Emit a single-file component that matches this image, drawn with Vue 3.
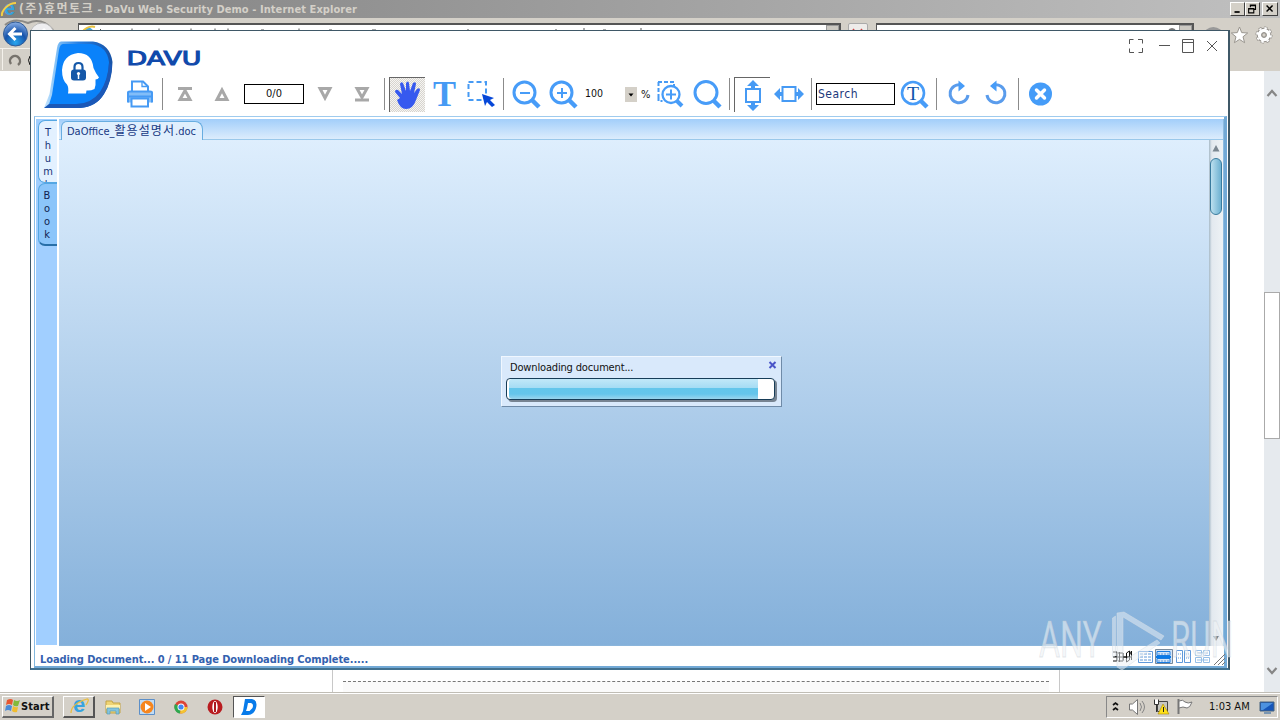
<script setup>
const thumb = ['T', 'h', 'u', 'm', 'b']
const book = ['B', 'o', 'o', 'k']
const progress = 94
</script>

<template>
  <div class="desktop">
    <div class="titlebar">
      <svg width="18" height="18" viewBox="0 0 18 18">
        <text x="4" y="14.500" class="ie-e" font-size="20">e</text>
        <path d="M2 16C1 11 8 3 16 3" fill="none" stroke="#f4cf45" stroke-width="2" />
      </svg>
      <span class="title-text"><span class="hangul-title">(주)휴먼토크</span> - DaVu Web Security Demo - Internet Explorer</span>
      <div class="caption">
        <svg width="15" height="14" viewBox="0 0 15 14"><path d="M4 10.500h6" stroke="#000" stroke-width="2" /></svg>
        <svg width="15" height="14" viewBox="0 0 15 14"><path d="M5 5V2.500h6v5H9M5 3h6M3 6.500h6v5H3zM3 7h6" fill="none" stroke="#000" stroke-width="1.300" /></svg>
        <svg class="gap" width="16" height="14" viewBox="0 0 16 14"><path d="M4 3l7 7M11 3l-7 7" stroke="#000" stroke-width="1.700" /></svg>
      </div>
    </div>

    <div class="browser-nav">
      <svg width="78" height="53" viewBox="0 18 78 53">
        <defs>
          <radialGradient id="back" cx=".5" cy=".85" r=".8">
            <stop offset="0" stop-color="#29a7ef" /><stop offset=".55" stop-color="#1654ab" /><stop offset="1" stop-color="#7ea5df" />
          </radialGradient>
        </defs>
        <path d="M5 25Q14 17 28 23Q42 17 53 30" fill="none" stroke="#8c8a86" stroke-width="2" />
        <circle cx="42" cy="35" r="12" fill="#eeeef0" stroke="#bbb" />
        <path d="M36 34h11M43 29l5 5-5 5" fill="none" stroke="#fff" stroke-width="3" />
        <circle cx="15.500" cy="34" r="12" fill="url(#back)" stroke="#315c96" />
        <path d="M22 34H10M15.500 28L9.500 34l6 6" fill="none" stroke="#fff" stroke-width="3" />
        <path d="M0 48.500h30" stroke="#f4f1eb" /><path d="M2.500 49v21" stroke="#f4f1eb" />
        <path d="M11 64a5 5 0 1 1 7 1" fill="none" stroke="#77736d" stroke-width="2.500" />
        <path d="M30 56q-3 4 0 9" fill="none" stroke="#111" />
      </svg>
      <div class="address">
        <svg width="580" height="8" viewBox="0 0 580 8"><path d="M4 9Q9-1 15 9" fill="none" stroke="#45a5df" stroke-width="3" /><path d="M2 8Q9 0 16 2" fill="none" stroke="#e8c13e" stroke-width="2" /><path d="M21.500 4v4M31 5v3M35 5v3M53 3.500v4.500M80 3.500v4.500M112 3.500v4.500M136 3.500v4.500M149 3.500v4.500M182 5h3M220 3.500v4.500M250 5h3M293 5h4M388 5h2M476 5h2M504 4h2M524 5h3M561 4h2" stroke="#555" fill="none" /></svg>
        <i class="drop-btn"></i>
      </div>
      <div class="refresh"><svg width="18" height="11" viewBox="0 0 18 11"><path d="M4 5l4 5M13 5l-4 5" stroke="#c44" stroke-width="1.500" /></svg></div>
      <div class="address search"><svg width="12" height="8" viewBox="0 0 12 8"><path d="M1 7q4-6 8 0" fill="none" stroke="#777" stroke-width="2" /></svg><i class="drop-btn"></i></div>
      <svg class="tools" width="86" height="32" viewBox="1194 20 86 32">
        <path d="M1207 31q6-5 13 0" fill="none" stroke="#999" stroke-width="3" />
        <path d="M1239.500 27l2.200 5.600 6 .4-4.700 3.800 1.600 5.900-5.100-3.300-5.100 3.300 1.600-5.900-4.700-3.800 6-.4z" fill="#fff" stroke="#99958e" />
        <circle cx="1264" cy="35" r="7" fill="none" stroke="#8d8984" stroke-width="3" stroke-dasharray="3 2.500" />
        <circle cx="1264" cy="35" r="4.800" fill="none" stroke="#8d8984" stroke-width="5" />
        <circle cx="1264" cy="35" r="7" fill="none" stroke="#fff" stroke-width="1.800" stroke-dasharray="2.500 3" stroke-dashoffset="-.2" />
        <circle cx="1264" cy="35" r="4.500" fill="none" stroke="#fff" stroke-width="3.600" />
        <circle cx="1264" cy="35" r="2.200" fill="#d4d0c8" stroke="#8d8984" />
      </svg>
    </div>

    <div class="page">
      <div class="page-content"><div class="paper"><div class="dots"></div></div></div>
      <div class="page-scroll">
        <svg width="16" height="42" viewBox="0 0 16 42"><path d="M3.500 25l4.500-5 4.500 5" fill="none" stroke="#868686" stroke-width="2.200" /></svg>
        <div class="page-thumb"></div>
        <svg width="16" height="42" viewBox="0 0 16 42"><path d="M3.500 18l4.500 5 4.500-5" fill="none" stroke="#868686" stroke-width="2.200" /></svg>
      </div>
    </div>

    <div class="taskbar">
      <div class="start">
        <svg width="18" height="18" viewBox="0 0 18 18">
          <path d="M4 3q4-2 6 0l-1 5q-3-2-6 0z" fill="#e75731" /><path d="M11 3q3 2 6 0l-2 6q-3 1-5-1z" fill="#83ba3a" />
          <path d="M3 9q3-2 6 0l-1 5q-3-2-6 0z" fill="#4a8bd8" /><path d="M10 9q3 2 5 1l-1 5q-3 1-5-1z" fill="#f1bd2f" />
        </svg><b>Start</b>
      </div>
      <div class="task raised">
        <svg width="22" height="20" viewBox="0 0 22 20"><text x="5" y="16" class="ie-e" font-size="22">e</text><path d="M3 17Q3 8 19 3q3 0-1 6" fill="none" stroke="#e8bd40" stroke-width="1.300" /></svg>
      </div>
      <div class="task"><svg width="20" height="20" viewBox="0 0 20 20"><path d="M3 4h6l1 2h7v10H3z" fill="#efd475" stroke="#c3a345" /><path d="M3 8h14v4H3z" fill="#fff2ae" /><path d="M4 17v-6h12v6h-3v-3H7v3z" fill="#83c4df" stroke="#5a9fb9" stroke-width=".7" /></svg></div>
      <div class="task"><svg width="18" height="18" viewBox="0 0 18 18"><path d="M1.500 1.500h15v15h-15z" fill="#c0dcf5" stroke="#5c8fc8" /><circle cx="9" cy="9" r="6.500" fill="#f6861e" /><path d="M7 5l6 4-6 4z" fill="#fff" /></svg></div>
      <div class="task"><svg width="18" height="18" viewBox="0 0 18 18"><circle cx="9" cy="9" r="6.500" fill="#dc4437" /><path d="M9 9L3 6a6.500 6.500 0 0 0 5 9.500z" fill="#2da94f" /><path d="M9 9h6.500a6.500 6.500 0 0 1-7.500 6.500z" fill="#f4c430" /><circle cx="9" cy="9" r="3.500" fill="#fff" /><circle cx="9" cy="9" r="2.600" fill="#4187f3" /></svg></div>
      <div class="task"><svg width="18" height="18" viewBox="0 0 18 18"><circle cx="9" cy="9" r="7.500" fill="#b91c20" /><ellipse cx="9" cy="9" rx="2.700" ry="6" fill="#fff" /><path d="M9 4v10" stroke="#ad1a20" stroke-width="2" /></svg></div>
      <div class="task active"><svg width="20" height="18" viewBox="0 0 20 18"><path d="M6 1h7q6 1 4 9-2 7-8 7H2l2-4z" fill="#087bea" /><path d="M9 5h3q3 1 1.500 5l-3 3H7l1-3z" fill="#fff" /></svg></div>
      <div class="tray">
        <svg width="92" height="22" viewBox="1107 696 92 22">
          <path d="M1113 705l2.500-2 2.500 2M1113 710l2.500-2 2.500 2" fill="none" stroke="#111" stroke-width="1.700" />
          <path d="M1129.500 704h3l5-4.500v15l-5-4.500h-3z" fill="#fff" stroke="#777" /><path d="M1140 703q3 4 0 8M1142 701q5 6 0 12" fill="none" stroke="#858585" />
          <path d="M1157.500 701.500h10v10h-10z" fill="#c7c7c1" stroke="#444" /><path d="M1154.500 699.500v5h4v-5M1156.500 704v8" fill="#fff" stroke="#333" />
          <path d="M1163 704l6 10h-11z" fill="#ffe119" stroke="#a98700" stroke-width=".6" /><path d="M1163.500 707v5" stroke="#222" />
          <path d="M1178.500 699v15" stroke="#777" stroke-width="2" /><path d="M1179 701q4-2 6 1 3 2 7 0-2 6-5 6-4-2-8 0z" fill="#fff" stroke="#777" />
        </svg>
        <span>1:03 AM</span>
        <svg width="16" height="18" viewBox="0 0 16 18"><path d="M1 4h14v9H1z" fill="#1656ba" stroke="#49647f" /><path d="M2 5h12L4 12H2z" fill="#4d92e0" /><path d="M5 15h7" stroke="#7b97b2" stroke-width="2" /></svg>
      </div>
    </div>

    <section class="window">
      <header class="header">
        <svg class="logo" width="76" height="76" viewBox="40 38 76 76">
          <defs>
            <linearGradient id="edge" x1="0" x2="1"><stop offset="0" stop-color="#c9e7ff" /><stop offset=".2" stop-color="#7dbdf5" /><stop offset=".5" stop-color="#2580e5" /><stop offset="1" stop-color="#1752a5" /></linearGradient>
          </defs>
          <path d="M61 41.500H93Q110 44 112.500 62Q112 82 104 94Q96 107 80 108H44L49.500 94L57 48Q58 42 61 41.500Z" fill="url(#edge)" />
          <path d="M63 44H91Q107 46 109 62Q109 79 101 91Q94 104 78 104.500H49L52 95L59 50Q60 44 63 44Z" fill="#0a82fa" />
          <path d="M44 108l5-4H76Q91 104 100 92q8-12 9-29l3 2Q111 82 104 94 96 107 80 108z" fill="#1b58b7" />
          <path d="M68 93.500q1-6-1-9Q62 80 62 70q1-15 16-17 14 0 15.500 15 2 5 5.500 9.500-1 2-3.500 2 .5 6-1 9.500-4 2-8 1.500L86 93.500z" fill="#fff" />
          <path d="M74.500 70v-3q0-4 4-4t4 4v3" fill="none" stroke="#1558a8" stroke-width="2.200" />
          <rect x="71" y="69.500" width="15" height="11" rx="3" fill="#1558a8" /><circle cx="78.500" cy="73.500" r="1.600" fill="#fff" /><path d="M78.500 73v6" stroke="#fff" stroke-width="1.500" />
        </svg>
        <div class="header-main">
          <div class="brand-row">
            <svg class="brand" width="90" height="26" viewBox="0 0 90 26">
              <text x="-.5" y="18" textLength="75" lengthAdjust="spacingAndGlyphs">DAVU</text>
            </svg>
            <svg width="92" height="16" viewBox="1128 38 92 16">
              <path d="M1129.500 44v-4.500h4M1138 39.500h4.500v4M1142.500 48v4.500h-4M1134 52.500h-4.500v-4M1159 45.500h11M1182.500 39.500h11v13h-11zM1182 42.500h12M1207 41l10 10M1217 41l-10 10" fill="none" stroke="#555" />
            </svg>
          </div>
          <div class="toolbar">
            <svg width="124" height="38" viewBox="120 75 124 38" fill="none">
              <g stroke="#469af4" stroke-width="2" transform="translate(0 .5)">
                <path d="M132 91v-10h11l5 5v5" fill="#fff" /><path d="M142 81v5h6" stroke-width="1.300" />
                <path d="M128 91h24v11h-24z" fill="#82bdf8" stroke="none" /><path d="M128 102V92q0-1 2-1h20q2 0 2 1v10M128 96h24" />
                <path d="M131.500 98h16.500v8h-16.500z" fill="#fff" />
              </g>
              <path d="M162.500 78v32" stroke="#8b8b8b" />
              <path d="M178 88.500h14" stroke="#a8a8a8" stroke-width="3" /><path d="M185 90.500l5 9h-10z" stroke="#a8a8a8" stroke-width="3" />
              <path d="M222 90l5 9.500h-10z" stroke="#a8a8a8" stroke-width="3" />
            </svg>
            <div class="field page-no">0/0</div>
            <svg width="85" height="38" viewBox="304 75 85 38" fill="none">
              <path d="M320 88.500h10l-5 9.500zM357 88.500h10l-5 9z" stroke="#a8a8a8" stroke-width="3" />
              <path d="M355 100h14" stroke="#a8a8a8" stroke-width="3" /><path d="M384.500 78v32" stroke="#8b8b8b" />
            </svg>
            <div class="pressed hand">
              <svg width="35" height="34" viewBox="390 77 35 34"><path d="M400 97l-5-6q0-3 3-2l4 4-2-10q1-3 3-1l3 8v-8q2-3 3 0l1 8 3-8q3-2 3 1l-2 9 3-4q3-2 3 1l-4 10q-3 9-10 9-6 0-9-9z" fill="#3659ef" /></svg>
            </div>
            <svg width="160" height="38" viewBox="425 75 160 38" fill="none">
              <text x="433" y="106" class="serif-t" font-size="36" textLength="23" lengthAdjust="spacingAndGlyphs">T</text>
              <path d="M468.500 82h17.500v18h-17.500z" stroke="#469af4" stroke-width="2" stroke-dasharray="5 3" />
              <path d="M482 94l12 4-4 2 5 5-3 2-5-5-2 4z" fill="#0647d8" /><path d="M503.500 78v32" stroke="#8b8b8b" />
              <g stroke="#479cf8" stroke-width="3">
                <circle cx="524.500" cy="92.500" r="10.500" /><path d="M520 93h10" stroke-width="2" /><path d="M532 100l7 7" stroke-width="4.500" />
                <circle cx="561.500" cy="92.500" r="10.500" /><path d="M557 93h10M562 88v10" stroke-width="2" /><path d="M569 100l7 7" stroke-width="4.500" />
              </g>
            </svg>
            <span class="zoom-value">100</span>
            <span class="combo"><svg width="12" height="15" viewBox="0 0 12 15"><path d="M3.500 6.500h5L6 9.500z" fill="#000" /></svg></span>
            <span class="percent">%</span>
            <svg width="81" height="38" viewBox="653 75 81 38" fill="none">
              <path d="M658.500 97v4h4M658 82h16v7M658.500 82v16" stroke="#469af4" stroke-width="2" stroke-dasharray="4 2" />
              <g stroke="#479cf8"><circle cx="671" cy="94.500" r="8.500" fill="#fff" stroke-width="2.300" /><path d="M666 94.500h10M671 89.500v10" stroke-width="2" /><path d="M677 101l5 5" stroke-width="4" />
                <circle cx="706" cy="92.500" r="11" stroke-width="3" /><path d="M713 100l7 7" stroke-width="4.500" /></g>
              <path d="M729.500 78v32" stroke="#8b8b8b" />
            </svg>
            <div class="pressed fit">
              <svg width="35" height="34" viewBox="735 77 35 34"><path d="M746 88h14v13h-14z" fill="none" stroke="#469af4" stroke-width="2" /><path d="M753 79l6 6h-4v3h-4v-3h-4zM753 110l6-6h-4v-3h-4v3h-4z" fill="#469af4" /></svg>
            </div>
            <svg width="46" height="38" viewBox="770 75 46 38">
              <path d="M782.500 87h13v14h-13z" fill="#fff" stroke="#469af4" stroke-width="2" /><path d="M774 94l6-6v4h2v4h-2v4zM804 94l-6-6v4h-2v4h2v4z" fill="#469af4" /><path d="M811.500 78v32" stroke="#8b8b8b" />
            </svg>
            <div class="field search-field">Search</div>
            <svg width="165" height="38" viewBox="895 75 165 38" fill="none">
              <g stroke="#479cf8"><circle cx="913" cy="93" r="11" stroke-width="2.600" /><path d="M921 101l6 6" stroke-width="4.500" />
                <path d="M961 85A9 9 0 1 0 968 95M994 85A9 9 0 1 1 987 95" stroke-width="3" stroke="#5a9cec" /></g>
              <text x="907" y="99.500" class="small-t" font-size="18" textLength="12" lengthAdjust="spacingAndGlyphs">T</text>
              <path d="M958.500 80.500l6.500 5.500-6.500 5.500zM996.500 80.500l-6.500 5.500 6.500 5.500z" fill="#479cf8" />
              <path d="M936.500 78v32M1018.500 78v32" stroke="#8b8b8b" />
              <circle cx="1040.500" cy="94" r="11.500" fill="#459cf8" /><path d="M1036.500 90l8 8M1044.500 90l-8 8" stroke="#fff" stroke-width="3.500" stroke-linecap="round" />
            </svg>
          </div>
        </div>
      </header>

      <div class="workspace">
        <aside class="side">
          <div class="side-tab"><span v-for="c in thumb" :key="c">{{ c }}</span></div>
          <div class="side-tab dark"><span v-for="(c, i) in book" :key="i">{{ c }}</span></div>
        </aside>
        <main class="main">
          <div class="tabs"><div class="tab">DaOffice_<span class="hangul-tab">활용설명서</span>.doc</div></div>
          <div class="viewer">
            <div class="canvas">
              <div class="dialog">
                <div class="dialog-head"><span>Downloading document...</span><svg width="9" height="9" viewBox="0 0 9 9"><path d="M1.500 1l6 6M7.500 1l-6 6" stroke="#4a55c8" stroke-width="2" /></svg></div>
                <div class="bar"><div class="fill" :style="{ width: progress + '%' }"></div></div>
              </div>
            </div>
            <div class="scroll">
              <svg width="14" height="18" viewBox="0 0 14 18"><path d="M3.500 11.500L7 5l3.500 6.500z" fill="#7b8791" /></svg>
              <div class="scroll-thumb"></div>
              <svg class="down" width="14" height="16" viewBox="0 0 14 16"><path d="M4 6h6l-3 5z" fill="#7b8791" /></svg>
            </div>
          </div>
        </main>
      </div>
      <footer class="status">
        <b>Loading Document... 0 / 11 Page Downloading Complete.....</b>
        <svg width="116" height="19" viewBox="1110 647 116 19" fill="none">
          <path d="M1113 652h4v9h-4M1113 656.500h4M1119.500 652v10M1118 653h5v8h-5M1123 657h3M1126.500 662v-9l3-2v9l-3 2M1129.500 655l2-4v9M1113 657h19" stroke="#111" />
          <g stroke="#5f99da"><path d="M1138.500 651.500h14v11h-14z" /><path d="M1140 654h11M1140 657h11M1140 660h11" stroke-dasharray="3 1" />
            <path d="M1155.500 649.500h17v14h-17z" fill="#d3e5f8" stroke="#77899b" /><path d="M1157 651.500h13v4h-13zM1157 658.500h13v4h-13z" stroke="#187be0" /><path d="M1156 657h15" stroke="#087ae8" stroke-width="2" /><path d="M1158 654h11M1158 661h11" stroke-dasharray="2 1" />
            <path d="M1176.500 650.500h6v12h-6zM1184.500 650.500h6v12h-6z" /><path d="M1178 654h3M1178 658h3M1186 654h3M1186 658h3" stroke-dasharray="1" />
            <path d="M1195.500 650.500h6v5h-6zM1203.500 650.500h6v5h-6zM1195.500 657.500h6v5h-6zM1203.500 657.500h6v5h-6zM1197 653h11M1197 660h11" stroke="#96bfe7" /></g>
          <path d="M1214 665l11-11M1218 665l7-7M1222 665l3-3" stroke="#777" />
        </svg>
      </footer>
    </section>

    <svg class="watermark" width="210" height="66" viewBox="1034 607 210 66">
      <g class="mark-text" font-size="50">
        <text x="1039" y="657" textLength="63" lengthAdjust="spacingAndGlyphs">ANY</text>
        <text x="1171" y="657" textLength="62" lengthAdjust="spacingAndGlyphs">RUN</text>
      </g>
      <path d="M1112.500 657v-39l3-2v40zM1124 612l40 24-3 4-38-23v44l34-21 3 3-38 27-5-3v-54z" class="mark-shape" />
    </svg>
  </div>
</template>

<style>
body { margin: 0; overflow: hidden; }
</style>
<style scoped>
.desktop { position: relative; width: 1280px; height: 720px; overflow: hidden; background: #fff; display: flex; flex-direction: column; font: 11px "DejaVu Sans Condensed", "DejaVu Sans", "Noto Sans CJK KR", sans-serif; color: #111; }
.desktop * { box-sizing: border-box; }
svg { display: block; flex: none; }
.ie-e { font-family: "Liberation Sans", sans-serif; font-weight: bold; fill: #36a3e0; }
.titlebar { height: 18px; display: flex; align-items: center; background: linear-gradient(90deg, #808080, #c0c0c0); }
.title-text { color: #d4d0c8; font-weight: bold; letter-spacing: .07px; margin-left: 1px; line-height: 17px; white-space: nowrap; }
.hangul-title { font-size: 12px; font-weight: 700; letter-spacing: 1.4px; }
.hangul-tab { font-size: 12px; letter-spacing: 1.05px; }
.caption { margin-left: auto; display: flex; margin-right: 2px; }
.caption svg { background: #d4d0c8; border: 1px solid #fff; border-right-color: #404040; border-bottom-color: #404040; }
.caption .gap { margin-left: 2px; }
.browser-nav { height: 53px; background: #d4d0c8; display: flex; align-items: flex-start; }
.address { width: 763px; height: 14px; margin-top: 5px; background: #fff; border: 1px solid #555; border-width: 2px 2px 0 1px; display: flex; justify-content: space-between; }
.drop-btn { width: 13px; height: 12px; background: #ccc9c2; border: 1px solid #999; }
.refresh { width: 20px; height: 13px; margin: 5px 8px 0 7px; background: #eeecea; border: 1px solid #aaa; border-radius: 2px; }
.address.search { width: 318px; justify-content: flex-end; }
.tools { margin-top: 2px; }
.page { height: 621px; display: flex; }
.page-content { width: 1264px; display: flex; align-items: flex-end; justify-content: center; }
.paper { width: 728px; height: 621px; margin-left: 127px; border-left: 1px solid #c8c8c8; border-right: 1px solid #c8c8c8; display: flex; align-items: flex-end; }
.dots { width: 706px; height: 11px; margin: 0 auto 0 10px; border-top: 1px dashed #777; background: #fafafa; }
.page-scroll { width: 16px; height: 621px; background: #e6eaee; display: flex; flex-direction: column; }
.page-thumb { height: 147px; margin-top: 179px; margin-bottom: auto; background: #fff; border: 1px solid #aaa; }
.taskbar { height: 28px; background: #d4d0c8; border-top: 1px solid #c0bdb5; box-shadow: inset 0 1px #fff; display: flex; align-items: center; }
.start { width: 52px; height: 22px; margin-left: 2px; display: flex; align-items: center; border: 1px solid #fff; border-right: 2px solid #666; border-bottom: 2px solid #666; }
.start b { letter-spacing: .1px; }
.task { width: 32px; height: 22px; margin-left: 2px; display: flex; align-items: center; justify-content: center; }
.start + .task { margin-left: 9px; }
.task.raised { border: 1px solid #fff; border-right: 2px solid #555; border-bottom: 2px solid #555; }
.task.active { background: #fff; border: 1px solid #555; border-right-color: #fff; border-bottom-color: #fff; }
.tray { width: 172px; height: 22px; margin-left: auto; margin-right: 2px; display: flex; align-items: center; border: 1px solid #888; border-bottom-color: #fff; border-right-color: #fff; }
.tray span { width: 50px; margin-left: 10px; white-space: nowrap; }
.window { position: absolute; left: 30px; top: 30px; width: 1200px; height: 640px; background: #fff; border: 1px solid #3f5867; border-right-width: 2px; border-bottom: 2px solid #42718f; display: flex; flex-direction: column; }
.header { height: 85px; flex: none; display: flex; padding: 7px 0 0 9px; }
.header-main { width: 1105px; margin-left: 4px; }
.brand-row { height: 37px; display: flex; justify-content: space-between; align-items: flex-start; }
.brand { margin: 9px 0 0 7px; }
.brand text { font: 19px "DejaVu Sans", sans-serif; fill: #1049ab; stroke: #1049ab; stroke-width: 1px; }
.brand-row svg:last-child { margin-right: 5px; }
.toolbar { display: flex; align-items: center; height: 38px; }
.field { border: 1px solid #000; background: #fff; height: 20px; line-height: 18px; }
.page-no { width: 60px; text-align: center; }
.search-field { width: 79px; height: 22px; line-height: 20px; padding-left: 1px; color: #1b397b; font-size: 12px; letter-spacing: .5px; }
.pressed { border-left: 1px solid #666; border-top: 1px solid #666; }
.hand { width: 36px; height: 35px; background: repeating-conic-gradient(#d7d4ce 0 25%, #f6f5f3 0 50%) 0 0 / 2px 2px; }
.fit { width: 36px; height: 35px; }
.zoom-value { width: 40px; font-size: 10.5px; margin-top: -3px; }
.combo { width: 12px; height: 15px; background: #d4d0c8; }
.percent { width: 16px; padding-left: 4px; }
.serif-t { font-family: "Liberation Serif", serif; font-weight: bold; fill: #469af4; }
.small-t { font-family: "Liberation Serif", serif; fill: #0d56ad; }
.workspace { height: 530px; flex: none; margin-left: 3px; margin-right: 1px; border-top: 1px solid #9fcbee; border-left: 1px solid #8bbce5; border-right: 3px solid #72a9d6; display: flex; padding-top: 2px; }
.side { width: 24px; padding: 1px 0 0 2px; background: #a1cfff; border-right: 2px solid #fff; border-left: 1px solid #fff; border-bottom: 1px solid #fff; }
.side-tab { height: 63px; width: 19px; background: #e3f1ff; border: 1px solid #55a7e3; border-right: 0; border-radius: 7px 0 0 7px; overflow: hidden; padding-top: 5px; color: #173579; display: flex; flex-direction: column; align-items: center; line-height: 13px; }
.side-tab span { flex: none; height: 13px; }
.side-tab.dark { background: #8bc5fa; border-bottom: 2px solid #286fa8; color: #111e52; padding-right: 2px; }
.main { width: 1167px; display: flex; flex-direction: column; border-right: 1px solid #8dbbe0; }
.tabs { height: 21px; flex: none; background: linear-gradient(#a2cefa, #dcecfc); border-bottom: 1px solid #9ac8ea; padding: 2px 0 0 2px; }
.tab { width: 142px; height: 19px; background: #e0effd; border: 1px solid #68ade0; border-bottom: 0; border-radius: 6px 8px 0 0; padding-left: 5px; color: #173983; line-height: 19px; white-space: nowrap; }
.viewer { height: 506px; display: flex; }
.canvas { flex: 1; background: linear-gradient(#deeefd, #84b0da); border-bottom: 1px solid #8bb5db; padding: 216px 0 0 442px; }
.dialog { width: 281px; height: 51px; background: #d9e9fb; border: 1px solid #f0f7ff; border-right-color: #6f8ba8; border-bottom-color: #6f8ba8; padding: 4px 4px 4px 5px; }
.dialog-head { display: flex; justify-content: space-between; height: 17px; padding-left: 3px; line-height: 13px; letter-spacing: -.16px; }
.bar { width: 269px; height: 22px; margin-left: -1px; background: #fff; border: 1px solid #173d58; border-radius: 4px; box-shadow: 2px 2px #778492; padding: 0 0 0 2px; }
.fill { height: 20px; background: linear-gradient(#c1e8f8, #a4dcf4 45%, #63c6eb 46%, #65c5eb 75%, #9ad5ee); border-radius: 3px 0 0 3px; }
.scroll { width: 14px; background: linear-gradient(90deg, #a7bac7, #e3e9ef 20%, #eef2f5); display: flex; flex-direction: column; }
.scroll-thumb { width: 12px; height: 57px; margin-left: 1px; border: 1px solid #397b9e; border-radius: 6px; background: linear-gradient(90deg, #bce0ef, #6db1d1); }
.down { margin-top: auto; }
.status { height: 22px; flex: none; margin-left: 3px; margin-right: 1px; border-left: 1px solid #82b8df; border-right: 3px solid #72a9d6; border-bottom: 2px solid #72a9d6; display: flex; align-items: flex-start; justify-content: space-between; padding: 0 0 0 5px; }
.status svg { margin: 1px -2px 0 0; }
.status b { color: #3461af; letter-spacing: -.08px; line-height: 13px; margin-top: 7px; }
.watermark { position: absolute; left: 1034px; top: 607px; pointer-events: none; }
.mark-text { font-family: Roboto, "Open Sans", sans-serif; font-weight: 400; fill: #eef2f5; fill-opacity: .6; stroke: #bdc6cd; stroke-opacity: .4; stroke-width: .8px; }
.mark-shape { fill: #eef2f5; fill-opacity: .5; stroke: #d5dee5; stroke-opacity: .5; }
</style>
